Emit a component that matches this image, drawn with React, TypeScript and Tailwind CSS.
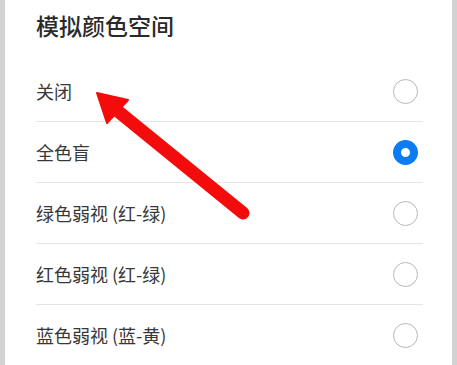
import React from "react";

const items = [
  { label: "关闭", selected: false },
  { label: "全色盲", selected: true },
  { label: "绿色弱视 (红-绿)", selected: false },
  { label: "红色弱视 (红-绿)", selected: false },
  { label: "蓝色弱视 (蓝-黄)", selected: false },
];

function Radio({ selected }: { selected: boolean }) {
  if (selected) {
    return <div className="w-[25px] h-[25px] rounded-full border-[8px] border-[#0b7cf2] bg-white mr-[5px]" />;
  }
  return <div className="w-[25px] h-[25px] rounded-full border border-[#b8b8b8] bg-white mr-[5px]" />;
}

export default function App() {
  return (
    <div
      className="relative w-[457px] h-[365px] overflow-hidden flex bg-[#d2d2d2]"
      style={{ fontFamily: '"Noto Sans CJK SC", "Noto Sans", sans-serif' }}
    >
      {/* Dialog panel */}
      <div className="flex-1 mx-[5px] bg-white pl-[31px] pr-[29px]">
        <div className="h-[61px] flex items-center pb-[10px] text-[23px] font-medium text-[#2a2a2a]">模拟颜色空间</div>
        {items.map((item, i) => (
          <div
            key={item.label}
            className={`h-[61px] flex items-center justify-between text-[18px] text-[#383838] ${
              i < items.length - 1 ? "border-b border-[#e6e6e6]" : ""
            }`}
          >
            <span>{item.label}</span>
            <Radio selected={item.selected} />
          </div>
        ))}
      </div>

      {/* Red arrow annotation */}
      <svg className="absolute left-0 top-0" width="457" height="365" viewBox="0 0 457 365">
        <line x1="114" y1="108" x2="243" y2="213" stroke="#f40c0c" strokeWidth="13" strokeLinecap="round" />
        <polygon points="97,93 128,100 107,123" fill="#f40c0c" strokeLinejoin="round" stroke="#f40c0c" strokeWidth="2" />
      </svg>
    </div>
  );
}
